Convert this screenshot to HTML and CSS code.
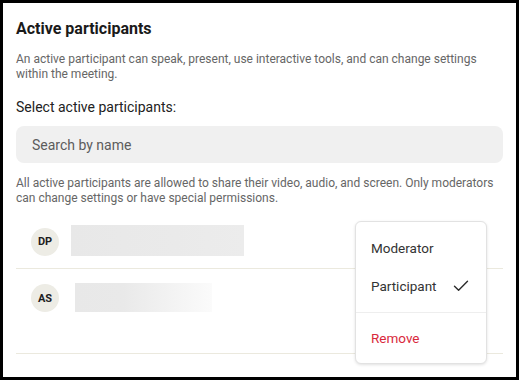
FILE: index.html
```html
<!DOCTYPE html>
<html>
<head>
<meta charset="utf-8">
<link rel="stylesheet" href="styles.css">
</head>
<body>
<div class="panel">
  <h1 class="title">Active participants</h1>
  <p class="desc">An active participant can speak, present, use interactive tools, and can change settings within the meeting.</p>
  <div class="label">Select active participants:</div>
  <div class="search">Search by name</div>
  <p class="note">All active participants are allowed to share their video, audio, and screen. Only moderators can change settings or have special permissions.</p>
  <div class="list">
    <div class="row row-1">
      <div class="avatar">DP</div>
      <div class="bar bar-1"></div>
    </div>
    <div class="row row-2">
      <div class="avatar">AS</div>
      <div class="bar bar-2"></div>
    </div>
  </div>
  <div class="menu">
    <div class="menu-group">
      <div class="item">Moderator</div>
      <div class="item">Participant
        <svg class="check" width="16" height="12" viewBox="0 0 16 12"><path d="M1.5 6.2 L5.6 10.2 L14.5 1.3" fill="none" stroke="#2b2b2b" stroke-width="1.4" stroke-linecap="round" stroke-linejoin="round"/></svg>
      </div>
    </div>
    <div class="menu-group sep">
      <div class="item danger">Remove</div>
    </div>
  </div>
</div>
</body>
</html>
```

FILE: styles.css
```css
html, body {
  margin: 0;
  padding: 0;
}
body {
  background: #000;
  padding: 3px;
  width: 513px;
  height: 374px;
  font-family: Roboto, "Liberation Sans", sans-serif;
}
.panel {
  position: relative;
  background: #fff;
  width: 513px;
  height: 374px;
  box-sizing: border-box;
  padding: 15px 13px 0 13px;
  overflow: hidden;
}
.title {
  margin: 0;
  font-size: 16px;
  line-height: 22px;
  font-weight: 700;
  color: #1a1a1a;
}
.desc {
  margin: 12px 0 0 0;
  font-size: 12px;
  line-height: 14.5px;
  color: #666;
}
.label {
  margin-top: 18px;
  font-size: 14px;
  line-height: 17px;
  color: #222;
}
.search {
  margin-top: 10px;
  height: 37px;
  border-radius: 8px;
  background: #f0f0f0;
  box-sizing: border-box;
  padding-left: 16px;
  display: flex;
  align-items: center;
  font-size: 14px;
  color: #5c5c5c;
}
.note {
  margin: 13px 0 0 0;
  font-size: 12px;
  line-height: 14.5px;
  color: #666;
}
.list {
  margin-top: 20px;
}
.row {
  display: flex;
  align-items: center;
  border-bottom: 1px solid #ebe9de;
}
.row-1 {
  padding-bottom: 12px;
}
.row-2 {
  padding-top: 14px;
  padding-bottom: 41px;
  align-items: flex-start;
}
.avatar {
  width: 28px;
  height: 28px;
  border-radius: 50%;
  background: #edece5;
  margin-left: 15px;
  display: flex;
  align-items: center;
  justify-content: center;
  font-size: 11px;
  font-weight: 700;
  color: #1e1e1e;
  flex: none;
}
.row-1 .avatar {
  margin-top: 2px;
}
.row-2 .avatar {
  margin-top: 1px;
}
.bar {
  flex: none;
}
.bar-1 {
  margin-left: 12px;
  width: 173px;
  height: 31px;
  background: linear-gradient(90deg, #e8e8e8 0%, #eaeaea 60%, #ececec 100%);
}
.bar-2 {
  margin-left: 16px;
  width: 137px;
  height: 29px;
  background: linear-gradient(90deg, #e8e8e8 0%, #e9e9e9 35%, #f4f4f4 75%, #fbfbfb 100%);
}
.menu {
  position: absolute;
  left: 352px;
  top: 218px;
  width: 132px;
  box-sizing: border-box;
  background: #fff;
  border: 1px solid #e2e2e2;
  border-radius: 6px;
  box-shadow: 0 1px 3px rgba(0, 0, 0, 0.12);
}
.menu-group {
  padding: 7px 0;
}
.menu-group.sep {
  border-top: 1px solid #eeeeee;
  padding: 6px 0;
}
.item {
  height: 38px;
  display: flex;
  align-items: center;
  justify-content: space-between;
  padding: 0 17px 0 15px;
  font-size: 13.5px;
  color: #333;
}
.item.danger {
  color: #d9293c;
}
.check {
  display: block;
}
```
